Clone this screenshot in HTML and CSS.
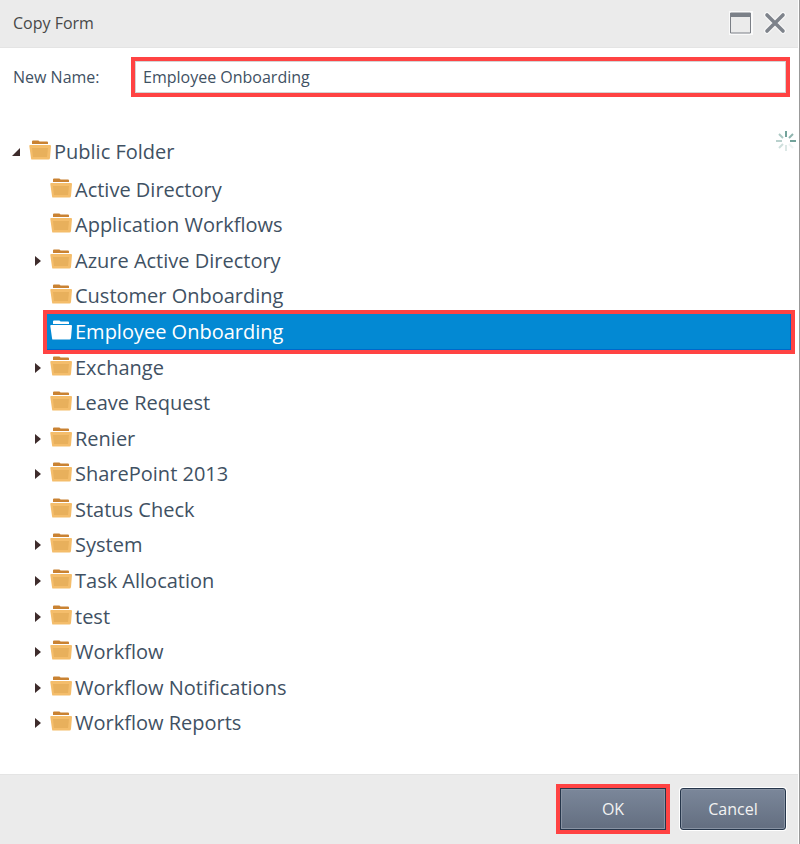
FILE: index.html
```html
<!DOCTYPE html>
<html lang="en">
<head>
<meta charset="utf-8">
<title>Copy Form</title>
<link rel="stylesheet" href="styles.css">
</head>
<body>
<svg class="defs" aria-hidden="true">
  <symbol id="folder" viewBox="0 0 22 20">
    <path class="tab" d="M3 4V1.500q0-1 1-1h5q1 0 1.500 1h7.500q1 0 1 1V4z"/>
    <path class="front" d="M1 5h20q1 0 1 1l-1 12q-0.200 1.500-1.500 1.500h-17Q2.200 19.500 2 18L0.300 6q0-1 0.700-1z"/>
    <path class="inner" d="M3 8h16l-1 9H4z"/>
  </symbol>
  <symbol id="closed" viewBox="0 0 8 12"><path d="M1 1l6 5-6 5z"/></symbol>
  <symbol id="opened" viewBox="0 0 8 12"><path d="M8 2v8H0z"/></symbol>
</svg>
<form class="dialog">
  <header class="titlebar">
    <h1>Copy Form</h1>
    <button class="tool" type="button" aria-label="Maximize">
      <svg width="24" height="24" viewBox="0 0 24 24"><path d="M0 0h24v24H0z" fill="#fafafa"/><path d="M1.500 2h20v20h-20z" fill="#ebebeb" stroke="#7b7f86"/><path d="M1 2h21v4H1z" fill="#7b8088"/></svg>
    </button>
    <button class="tool" type="button" aria-label="Close">
      <svg width="24" height="24" viewBox="0 0 24 24" fill="none" stroke-linecap="round"><path d="M4 4l16 16M20 4L4 20" stroke="#f8f8f8" stroke-width="6"/><path d="M4 4l16 16M20 4L4 20" stroke="#7e838b" stroke-width="3.600"/></svg>
    </button>
  </header>
  <div class="field">
    <label for="name">New Name:</label>
    <input id="name" type="text" value="Employee Onboarding">
  </div>
  <main class="content">
    <div class="root">
      <svg class="arrow"><use href="#opened"/></svg><svg class="folder"><use href="#folder"/></svg><span>Public Folder</span>
      <svg class="spinner" viewBox="0 0 22 22" stroke="#73a39b" stroke-width="2"><path d="M11 1v6"/><path d="M18 4l-4 4" opacity=".8"/><path d="M15 11h6"/><path d="M14 14l4 4" opacity=".12"/><path d="M11 15v6" opacity=".25"/><path d="M8 14l-4 4" opacity=".35"/><path d="M1 11h6" opacity=".5"/><path d="M4 4l4 4" opacity=".6"/></svg>
    </div>
    <ul class="tree">
      <li><svg class="folder"><use href="#folder"/></svg><span>Active Directory</span></li>
      <li><svg class="folder"><use href="#folder"/></svg><span>Application Workflows</span></li>
      <li><svg class="arrow"><use href="#closed"/></svg><svg class="folder"><use href="#folder"/></svg><span>Azure Active Directory</span></li>
      <li><svg class="folder"><use href="#folder"/></svg><span>Customer Onboarding</span></li>
      <li class="selected"><svg class="folder"><use href="#folder"/></svg><span>Employee Onboarding</span></li>
      <li><svg class="arrow"><use href="#closed"/></svg><svg class="folder"><use href="#folder"/></svg><span>Exchange</span></li>
      <li><svg class="folder"><use href="#folder"/></svg><span>Leave Request</span></li>
      <li><svg class="arrow"><use href="#closed"/></svg><svg class="folder"><use href="#folder"/></svg><span>Renier</span></li>
      <li><svg class="arrow"><use href="#closed"/></svg><svg class="folder"><use href="#folder"/></svg><span>SharePoint 2013</span></li>
      <li><svg class="folder"><use href="#folder"/></svg><span>Status Check</span></li>
      <li><svg class="arrow"><use href="#closed"/></svg><svg class="folder"><use href="#folder"/></svg><span>System</span></li>
      <li><svg class="arrow"><use href="#closed"/></svg><svg class="folder"><use href="#folder"/></svg><span>Task Allocation</span></li>
      <li><svg class="arrow"><use href="#closed"/></svg><svg class="folder"><use href="#folder"/></svg><span>test</span></li>
      <li><svg class="arrow"><use href="#closed"/></svg><svg class="folder"><use href="#folder"/></svg><span>Workflow</span></li>
      <li><svg class="arrow"><use href="#closed"/></svg><svg class="folder"><use href="#folder"/></svg><span>Workflow Notifications</span></li>
      <li><svg class="arrow"><use href="#closed"/></svg><svg class="folder"><use href="#folder"/></svg><span>Workflow Reports</span></li>
    </ul>
  </main>
  <footer class="actions">
    <button class="btn marked" type="button">OK</button>
    <button class="btn" type="button">Cancel</button>
  </footer>
</form>
</body>
</html>
```
FILE: styles.css
```css
* { box-sizing: border-box; }
body { margin: 0; background: #fff; color: #3f5163; font-family: "Open Sans", sans-serif; font-size: 16px; }
.defs { display: none; }
.dialog { display: flex; flex-direction: column; min-height: 100vh; border-right: 1px solid #999; }
.titlebar { display: flex; align-items: center; gap: 10px; height: 48px; padding: 0 11px 1px 13px; margin-right: 1px; background: #ebebeb; border-bottom: 1px solid #e4e4e4; }
.titlebar h1 { flex: 1; margin: 0; font-size: 16px; font-weight: 400; color: #484848; }
.tool { display: flex; padding: 0; border: 0; background: none; }
.field { display: flex; align-items: center; padding: 13px 13px 0 13px; }
.field label { width: 122px; }
.field input { flex: 1; min-width: 0; height: 32px; padding: 0 7px; border: 1px solid #d4d4d4; outline: 4px solid #ff4343; border-radius: 0; background: #fff; color: #3f5163; font: inherit; }
.content { flex: 1; display: flex; flex-direction: column; padding: 43px 4px 33px 0; font-size: 20px; line-height: 32px; }
.root { display: flex; align-items: center; height: 32px; padding-left: 12px; margin-bottom: 4px; }
.root .folder { margin-left: 9px; }
.spinner { width: 22px; height: 22px; margin: 0 -2px 22px auto; fill: none; }
.tree { flex: 1; display: grid; grid-auto-rows: 1fr; margin: 0; padding: 0 4px 0 47px; list-style: none; }
.tree li { position: relative; display: flex; align-items: center; padding-left: 3px; }
.tree .arrow { position: absolute; left: -13px; }
.arrow { width: 8px; height: 12px; fill: #3e2c2c; }
.folder { width: 22px; height: 20px; margin: 0 3px 4px 0; }
.tab { fill: #c98232; }
.front { fill: #f4bd6b; }
.inner { fill: #e8b05c; }
.selected { z-index: 1; background: #0389d3; color: #fff; outline: 4px solid #ff4343; box-shadow: inset -1px -1px #0068ca; }
.selected .folder { filter: brightness(0) invert(1); }
.actions { display: flex; justify-content: flex-end; align-items: center; gap: 14px; height: 70px; padding: 0 12px 1px; margin-right: 1px; background: #ebebeb; border-top: 1px solid #e4e4e4; }
.btn { width: 106px; height: 42px; padding: 0; border: 1px solid #26364b; border-radius: 3px; background: linear-gradient(#7b879a, #636e80); box-shadow: inset 0 0 0 1px #8893a3, 0 0 0 1px #fff; color: #f2f2f2; font: inherit; }
.marked { outline: 4px solid #ff4343; border-radius: 0; }
```
